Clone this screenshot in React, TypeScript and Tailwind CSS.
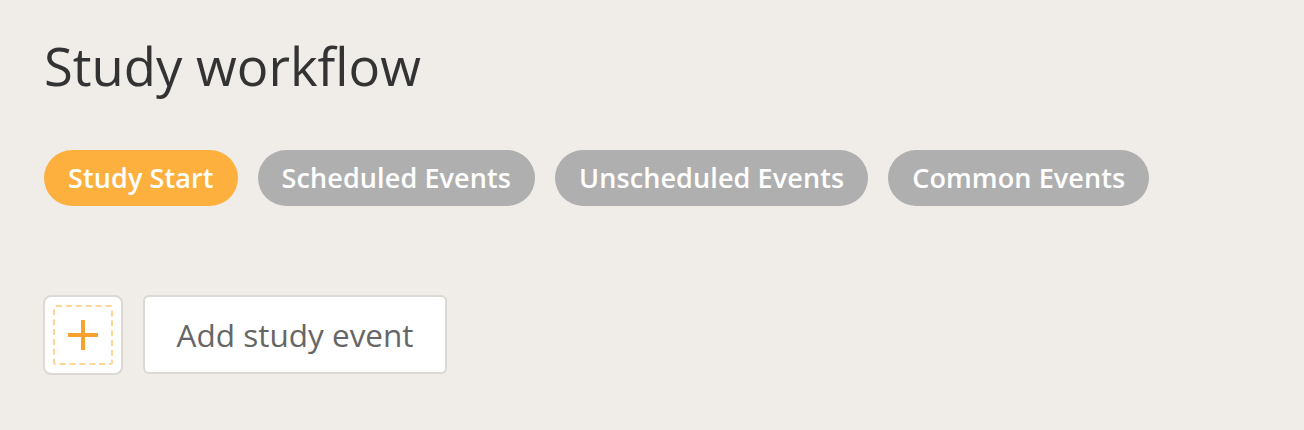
import React from "react";

const tabs = ["Study Start", "Scheduled Events", "Unscheduled Events", "Common Events"];

export default function App() {
  return (
    <div className="min-h-[430px] w-full bg-[#f0ede9] px-[43px] pt-[32px] font-['Open_Sans',sans-serif]">
      <h1 className="pl-px text-[52.6px] leading-[68px] font-normal text-[#333333]">
        Study workflow
      </h1>

      <div className="mt-[50px] flex gap-5 pl-px">
        {tabs.map((t, i) => (
          <button
            key={t}
            className={
              "h-[56px] rounded-full px-[24px] text-[27px] font-semibold tracking-[0.1px] text-white " +
              (i === 0 ? "bg-[#fdb03e]" : "bg-[#afafaf]")
            }
          >
            {t}
          </button>
        ))}
      </div>

      <div className="mt-[89px] flex gap-5">
        <div className="flex h-[80px] w-[80px] items-center justify-center rounded-lg border-2 border-[#dcd8d4] bg-white">
          <div className="flex h-[60px] w-[60px] items-center justify-center rounded-[3px] border-2 border-dashed border-[#fdd595]">
            <svg width="32" height="32" viewBox="0 0 32 32">
              <path d="M16 1v30M1 16h30" stroke="#f7a12e" strokeWidth="4" />
            </svg>
          </div>
        </div>
        <button className="h-[79px] rounded-md border-2 border-[#dcd8d4] bg-white px-[31.5px] text-[31.5px] text-[#666666]">
          Add study event
        </button>
      </div>
    </div>
  );
}
